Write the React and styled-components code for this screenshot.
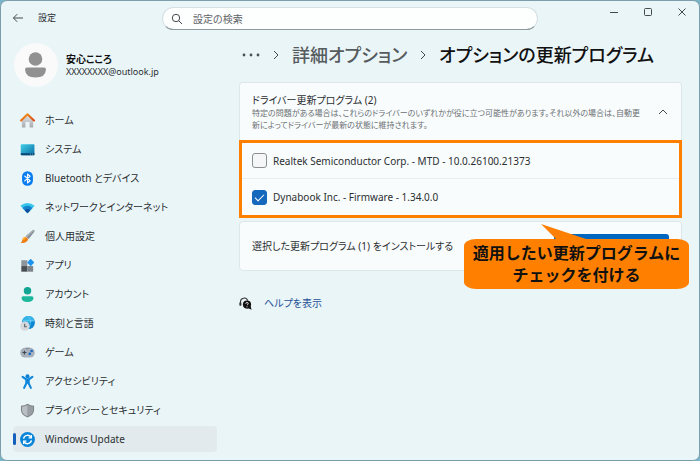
import {Component} from 'react'
import styled, {createGlobalStyle} from 'styled-components'

const HomeIcon = () => (
  <Icon viewBox="0 0 16 16">
    <defs>
      <linearGradient id="homeWall" x1="0" y1="0" x2="0" y2="1">
        <stop offset="0" stopColor="#e4e4e6" />
        <stop offset="1" stopColor="#a9abb0" />
      </linearGradient>
      <linearGradient id="homeRoof" x1="0" y1="0" x2="1" y2="1">
        <stop offset="0" stopColor="#f59a1c" />
        <stop offset="1" stopColor="#d9480f" />
      </linearGradient>
    </defs>
    <path d="M2 7 L8 1.6 L14 7 V15.4 H10.2 V9.6 H5.8 V15.4 H2 Z" fill="url(#homeWall)" />
    <path
      d="M1.1 8 L8 1.4 L14.9 8"
      fill="none"
      stroke="url(#homeRoof)"
      strokeWidth="2.2"
      strokeLinecap="round"
      strokeLinejoin="round"
    />
  </Icon>
)

const SystemIcon = () => (
  <Icon viewBox="0 0 16 16">
    <defs>
      <linearGradient id="screen" x1="0" y1="0" x2="1" y2="1">
        <stop offset="0" stopColor="#3fd0e6" />
        <stop offset="1" stopColor="#0d6ea8" />
      </linearGradient>
    </defs>
    <rect x="0.8" y="2.4" width="14.6" height="11.6" rx="1" fill="url(#screen)" />
    <path d="M0.8 12 H15.4 V13 a1 1 0 0 1 -1 1 H1.8 a1 1 0 0 1 -1 -1 Z" fill="#0a4674" />
    <path d="M10.6 13 h1 M12.8 13 h1" stroke="#8fd3ee" strokeWidth="0.8" />
  </Icon>
)

const BluetoothIcon = () => (
  <Icon viewBox="0 0 16 16">
    <rect x="2.2" y="0.2" width="11.6" height="15.6" rx="5.6" fill="#0a7cf0" />
    <path
      d="M5 5.4 L10.8 10.4 L8 12.8 V3.2 L10.8 5.6 L5 10.6"
      fill="none"
      stroke="#fff"
      strokeWidth="1.2"
      strokeLinejoin="round"
      strokeLinecap="round"
    />
  </Icon>
)

const NetworkIcon = () => (
  <Icon viewBox="0 0 16 16">
    <path d="M0.4 6.2 Q8 0 15.6 6.2 L8 14 Z" fill="#35c5ea" />
    <path d="M2.6 8.4 Q8 4 13.4 8.4 L8 14 Z" fill="#1383cf" />
    <path d="M5 10.8 Q8 8.2 11 10.8 L8 14 Z" fill="#0b4f9c" />
  </Icon>
)

const BrushIcon = () => (
  <Icon viewBox="0 0 16 16">
    <path d="M14.2 0.8 Q16 0.8 15.3 2.8 L9.2 10.6 L6 7.8 Z" fill="#848b94" />
    <path d="M14.2 0.8 L6 7.8 L7.4 9 L15.4 1.6 Z" fill="#a9afb6" />
    <path d="M5.4 8.4 Q8.4 8.8 8.6 11.2 Q7.2 15.6 0.6 14.8 Q2.2 13.6 2.4 11.6 Q3 8.6 5.4 8.4 Z" fill="#f07c14" />
    <path d="M5.4 8.4 Q3 8.6 2.4 11.6 L4 12 Q5 10 7 9 Z" fill="#ffb02e" />
  </Icon>
)

const AppsIcon = () => (
  <Icon viewBox="0 0 16 16">
    <rect x="1.4" y="2.4" width="6.4" height="6.2" fill="#8d949c" />
    <rect x="1.4" y="8.6" width="6.4" height="6" fill="#4a4f55" />
    <rect x="7.8" y="8.6" width="6.2" height="6" fill="#7c838b" />
    <rect
      x="8.6"
      y="2"
      width="5.6"
      height="5.6"
      rx="0.8"
      fill="#1c93ef"
      transform="rotate(45 11.4 4.8)"
    />
  </Icon>
)

const AccountIcon = () => (
  <Icon viewBox="0 0 16 16">
    <circle cx="8" cy="4" r="4" fill="#12a594" />
    <path d="M3.4 9.8 H12.6 Q14.4 9.8 14.4 11.6 Q14 16 8 16 Q2 16 1.6 11.6 Q1.6 9.8 3.4 9.8 Z" fill="#1fb79b" />
  </Icon>
)

const TimeIcon = () => (
  <Icon viewBox="0 0 16 16">
    <circle cx="9" cy="7" r="6.9" fill="#0f86d2" />
    <path d="M9 0.1 A6.9 6.9 0 0 1 15.4 4.6 Q11 8 4.6 8 L2.4 5 A6.9 6.9 0 0 1 9 0.1 Z" fill="#36b3e8" />
    <path d="M9 0.4 Q13.4 6.8 9 13.4 M3 5 H15.4" fill="none" stroke="#7bd8f7" strokeWidth="0.6" />
    <circle cx="5.2" cy="10.8" r="5" fill="#d5d9de" />
    <path d="M5 8.2 V11.4 H7.2" fill="none" stroke="#555b63" strokeWidth="1.1" />
  </Icon>
)

const GameIcon = () => (
  <Icon viewBox="0 0 16 16">
    <rect x="0.2" y="3" width="15.6" height="10.4" rx="5.2" fill="#a9b2bc" />
    <path d="M5.6 3 H10.6 L9.6 4.6 H6.6 Z" fill="#858e99" />
    <path d="M2.6 8 H6.8 M4.7 6 V10" stroke="#3f464f" strokeWidth="1.2" />
    <circle cx="12.4" cy="6.4" r="1.4" fill="#1467c4" />
    <circle cx="10.4" cy="9.4" r="1.4" fill="#1467c4" />
  </Icon>
)

const AccessibilityIcon = () => (
  <Icon viewBox="0 0 16 16">
    <circle cx="8" cy="2.4" r="2.1" fill="#0d7fd3" />
    <path d="M6 5 H10 V10 H6 Z" fill="#0d86dc" />
    <path
      d="M2.8 3 L6.6 5.8 H9.4 L13.2 3 M6.9 6 V9.6 L4.4 14.8 M9.1 6 V9.6 L11.6 14.8"
      fill="none"
      stroke="#0d86dc"
      strokeWidth="2.2"
      strokeLinecap="round"
      strokeLinejoin="round"
    />
  </Icon>
)

const ShieldIcon = () => (
  <Icon viewBox="0 0 16 16">
    <path d="M8 0.8 Q11 3 15 3 V7.6 Q15 12.6 8 15.4 Q1 12.6 1 7.6 V3 Q5 3 8 0.8 Z" fill="#7f858b" />
    <path d="M8 2.2 Q10.8 4 13.9 4.1 V7.6 Q13.9 11.8 8 14.2 Z" fill="#989ea4" />
    <path d="M8 2.2 Q5.2 4 2.1 4.1 V7.6 Q2.1 11.8 8 14.2 Z" fill="#b9bec3" />
  </Icon>
)

const UpdateIcon = () => (
  <Icon viewBox="0 0 16 16">
    <circle cx="8" cy="8" r="7.9" fill="#0a84d8" />
    <path
      d="M3.8 7 A4.4 4.4 0 0 1 11.8 5.6 M12.2 9 A4.4 4.4 0 0 1 4.2 10.4"
      fill="none"
      stroke="#fff"
      strokeWidth="1.5"
    />
    <path
      d="M12.2 3.2 V6.2 H9.2 M3.8 12.8 V9.8 H6.8"
      fill="none"
      stroke="#fff"
      strokeWidth="1.3"
    />
  </Icon>
)

const menuList = [
  {menuId: 'HOME', displayText: 'ホーム', MenuIcon: HomeIcon},
  {menuId: 'SYSTEM', displayText: 'システム', MenuIcon: SystemIcon},
  {
    menuId: 'BLUETOOTH',
    displayText: 'Bluetooth とデバイス',
    MenuIcon: BluetoothIcon,
  },
  {
    menuId: 'NETWORK',
    displayText: 'ネットワークとインターネット',
    MenuIcon: NetworkIcon,
  },
  {menuId: 'PERSONAL', displayText: '個人用設定', MenuIcon: BrushIcon},
  {menuId: 'APPS', displayText: 'アプリ', MenuIcon: AppsIcon},
  {menuId: 'ACCOUNT', displayText: 'アカウント', MenuIcon: AccountIcon},
  {menuId: 'TIME', displayText: '時刻と言語', MenuIcon: TimeIcon},
  {menuId: 'GAME', displayText: 'ゲーム', MenuIcon: GameIcon},
  {
    menuId: 'ACCESSIBILITY',
    displayText: 'アクセシビリティ',
    MenuIcon: AccessibilityIcon,
  },
  {
    menuId: 'PRIVACY',
    displayText: 'プライバシーとセキュリティ',
    MenuIcon: ShieldIcon,
  },
  {menuId: 'UPDATE', displayText: 'Windows Update', MenuIcon: UpdateIcon},
]

const driverList = [
  {
    driverId: 'realtek',
    displayText: 'Realtek Semiconductor Corp. - MTD - 10.0.26100.21373',
  },
  {driverId: 'dynabook', displayText: 'Dynabook Inc. - Firmware - 1.34.0.0'},
]

class App extends Component {
  state = {
    activeMenu: 'UPDATE',
    searchInput: '',
    isOpen: true,
    selected: ['dynabook'],
  }

  onChangeSearch = event => {
    this.setState({searchInput: event.target.value})
  }

  onToggleOpen = () => {
    this.setState(prevState => ({isOpen: !prevState.isOpen}))
  }

  onToggleDriver = id => {
    this.setState(prevState => ({
      selected: prevState.selected.includes(id)
        ? prevState.selected.filter(each => each !== id)
        : [...prevState.selected, id],
    }))
  }

  onRenderTitleBar = () => {
    const {searchInput} = this.state

    return (
      <TitleBar>
        <BackButton type="button" aria-label="戻る">
          <Glyph viewBox="0 0 12 12">
            <path d="M11 6 H1.5 M5.2 2.2 L1.4 6 L5.2 9.8" />
          </Glyph>
        </BackButton>
        <AppName>設定</AppName>
        <SearchBox>
          <Glyph viewBox="0 0 12 12">
            <circle cx="5" cy="5" r="3.7" />
            <path d="M7.8 7.8 L11 11" />
          </Glyph>
          <SearchInput
            type="text"
            aria-label="設定の検索"
            placeholder="設定の検索"
            value={searchInput}
            onChange={this.onChangeSearch}
          />
        </SearchBox>
        <WindowButtons>
          <WindowButton type="button" aria-label="最小化">
            <Glyph viewBox="0 0 12 12">
              <path d="M2 6.5 H10" />
            </Glyph>
          </WindowButton>
          <WindowButton type="button" aria-label="最大化">
            <Glyph viewBox="0 0 12 12">
              <rect x="2.5" y="2.5" width="7" height="7" rx="1" />
            </Glyph>
          </WindowButton>
          <WindowButton type="button" aria-label="閉じる">
            <Glyph viewBox="0 0 12 12">
              <path d="M2.5 2.5 L9.5 9.5 M9.5 2.5 L2.5 9.5" />
            </Glyph>
          </WindowButton>
        </WindowButtons>
      </TitleBar>
    )
  }

  onRenderSidebar = () => {
    const {activeMenu} = this.state

    return (
      <Sidebar>
        <Profile>
          <Avatar viewBox="0 0 44 44">
            <circle cx="22" cy="22" r="22" fill="#fafafa" />
            <circle cx="21.5" cy="16" r="6.8" fill="#919191" />
            <path
              d="M13 24.5 H30 Q32 24.5 32 26.5 Q31.5 34.5 21.5 34.5 Q11.5 34.5 11 26.5 Q11 24.5 13 24.5 Z"
              fill="#919191"
            />
          </Avatar>
          <div>
            <UserName>安心こころ</UserName>
            <UserMail>XXXXXXXX@outlook.jp</UserMail>
          </div>
        </Profile>
        <Menu>
          {menuList.map(({menuId, displayText, MenuIcon}) => (
            <li key={menuId}>
              <MenuLink
                href={`#${menuId}`}
                $isActive={menuId === activeMenu}
                onClick={() => this.setState({activeMenu: menuId})}
              >
                <MenuIcon />
                {displayText}
              </MenuLink>
            </li>
          ))}
        </Menu>
      </Sidebar>
    )
  }

  onRenderDrivers = () => {
    const {selected} = this.state

    return (
      <DriverList>
        {driverList.map(each => (
          <DriverItem key={each.driverId}>
            <Checkbox
              type="checkbox"
              id={each.driverId}
              checked={selected.includes(each.driverId)}
              onChange={() => this.onToggleDriver(each.driverId)}
            />
            <label htmlFor={each.driverId}>{each.displayText}</label>
          </DriverItem>
        ))}
      </DriverList>
    )
  }

  render() {
    const {isOpen, selected} = this.state

    return (
      <>
        <GlobalStyle />
        <Window>
          {this.onRenderTitleBar()}
          <Body>
            {this.onRenderSidebar()}
            <Content>
              <Breadcrumb>
                <Dots viewBox="0 0 18 6">
                  <circle cx="2" cy="3" r="1.4" />
                  <circle cx="9" cy="3" r="1.4" />
                  <circle cx="16" cy="3" r="1.4" />
                </Dots>
                <Glyph viewBox="0 0 12 12">
                  <path d="M4 2 L8 6 L4 10" />
                </Glyph>
                <CrumbLink href="#advanced">詳細オプション</CrumbLink>
                <Glyph viewBox="0 0 12 12">
                  <path d="M4 2 L8 6 L4 10" />
                </Glyph>
                <Heading>オプションの更新プログラム</Heading>
              </Breadcrumb>
              <DriverHeader>
                <div>
                  <SubHeading>ドライバー更新プログラム (2)</SubHeading>
                  <Description>
                    特定の問題がある場合は、これらのドライバーのいずれかが役に立つ可能性があります。それ以外の場合は、自動更新によってドライバーが最新の状態に維持されます。
                  </Description>
                </div>
                <ToggleButton
                  type="button"
                  aria-label="ドライバー更新プログラム"
                  aria-expanded={isOpen}
                  onClick={this.onToggleOpen}
                >
                  <Glyph viewBox="0 0 12 12">
                    <path d={isOpen ? 'M2 8 L6 4 L10 8' : 'M2 4 L6 8 L10 4'} />
                  </Glyph>
                </ToggleButton>
              </DriverHeader>
              {isOpen && this.onRenderDrivers()}
              <InstallCard>
                <Text>
                  選択した更新プログラム ({selected.length}) をインストールする
                </Text>
                <InstallButton
                  type="button"
                  aria-label="ダウンロードとインストール"
                />
                <Callout>
                  <CalloutTail viewBox="0 0 54 18">
                    <path d="M0 0 L54 18 H18 Z" />
                  </CalloutTail>
                  適用したい更新プログラムに
                  <br />
                  チェックを付ける
                </Callout>
              </InstallCard>
              <HelpRow>
                <HelpIcon viewBox="0 0 14 14">
                  <path
                    d="M1.6 7 V5.5 A4 4 0 0 1 9.4 4"
                    fill="none"
                    stroke="#333"
                    strokeWidth="1.1"
                  />
                  <rect x="0.4" y="5.5" width="2.2" height="4" rx="1" fill="#333" />
                  <circle cx="8.6" cy="8.2" r="4.4" fill="#111" />
                  <path d="M10 12 L13.6 13.6 L12.4 9.6 Z" fill="#111" />
                  <path
                    d="M7.3 7.3 Q7.3 5.9 8.6 5.9 Q9.9 5.9 9.9 7.2 Q9.8 8 8.6 8.8"
                    fill="none"
                    stroke="#fff"
                    strokeWidth="0.9"
                  />
                  <circle cx="8.6" cy="10.5" r="0.6" fill="#fff" />
                </HelpIcon>
                <HelpLink href="#help">ヘルプを表示</HelpLink>
              </HelpRow>
            </Content>
          </Body>
        </Window>
      </>
    )
  }
}

export default App

const GlobalStyle = createGlobalStyle`
  * {
    box-sizing:border-box;
  }
  body {
    margin:0;
    background-color:#79b4c9;
    font-family:'Noto Sans', 'Noto Sans CJK JP', sans-serif;
    font-size:10px;
    line-height:16px;
    font-feature-settings:'palt';
    color:#2b2f31;
  }
  button, input {
    font:inherit;
    color:inherit;
    font-feature-settings:inherit;
  }
`

const Window = styled.div`
  min-height:100vh;
  display:flex;
  flex-direction:column;
  background-color:#eaf5f8;
  border:1px solid #7b9eac;
  border-radius:7px;
`

const Icon = styled.svg`
  width:15px;
  height:15px;
  flex-shrink:0;
`

const Glyph = styled.svg`
  width:12px;
  height:12px;
  flex-shrink:0;
  fill:none;
  stroke:#44494c;
  stroke-width:1;
`

// title bar

const TitleBar = styled.header`
  display:flex;
  align-items:flex-start;
  height:36px;
  padding-left:11px;
`

const BackButton = styled.button`
  display:flex;
  padding:11px 0;
  border:none;
  background-color:transparent;
`

const AppName = styled.span`
  width:138px;
  flex-shrink:0;
  padding:9px 0 0 14px;
  font-size:9px;
`

const SearchBox = styled.div`
  flex:1;
  min-width:0;
  display:flex;
  align-items:center;
  column-gap:10px;
  height:23px;
  margin-top:6px;
  padding:0 8px;
  background-color:#fdfefe;
  border:1px solid #d5e0e3;
  border-bottom-color:#8f9a9d;
  border-radius:12px;
`

const SearchInput = styled.input`
  flex:1;
  min-width:0;
  padding:0;
  border:none;
  outline:none;
  background-color:transparent;

  &::placeholder {
    color:#5f6466;
  }
`

const WindowButtons = styled.div`
  display:flex;
  padding-left:59px;
`

const WindowButton = styled.button`
  display:flex;
  justify-content:center;
  width:34px;
  padding:5px 0;
  border:none;
  background-color:transparent;
`

// sidebar

const Body = styled.div`
  flex:1;
  display:flex;
`

const Sidebar = styled.aside`
  width:216px;
  flex-shrink:0;
  padding:6px 0 6px 12px;
`

const Profile = styled.div`
  display:flex;
  align-items:center;
  column-gap:8px;
  padding-left:1px;
`

const Avatar = styled.svg`
  width:44px;
  height:44px;
`

const UserName = styled.p`
  margin:0;
  font-weight:bold;
  line-height:14px;
  color:#111;
`

const UserMail = styled.p`
  margin:0;
  font-size:9px;
  line-height:12px;
`

const Menu = styled.ul`
  display:flex;
  flex-direction:column;
  row-gap:3px;
  margin:20px 0 0;
  padding:0;
  list-style:none;
`

const MenuLink = styled.a`
  position:relative;
  display:flex;
  align-items:center;
  column-gap:10px;
  height:26px;
  padding-left:7px;
  border-radius:4px;
  background-color:${props => (props.$isActive ? '#e2eaed' : 'transparent')};
  color:inherit;
  text-decoration:none;

  &::before {
    content:'';
    position:absolute;
    left:0;
    width:3px;
    height:12px;
    border-radius:2px;
    background-color:${props => (props.$isActive ? '#1560bd' : 'transparent')};
  }
`

// content

const Content = styled.main`
  flex:1;
  min-width:0;
  padding:4px 17px 0 22px;
`

const Breadcrumb = styled.nav`
  display:flex;
  align-items:center;
  column-gap:10px;
  height:28px;
  margin-bottom:13px;
  padding-left:3px;
  font-size:18px;
  font-weight:500;
  line-height:28px;
  white-space:nowrap;
`

const Dots = styled.svg`
  width:18px;
  height:6px;
  fill:#4b5053;
`

const CrumbLink = styled.a`
  color:#565b5e;
  text-decoration:none;
`

const Heading = styled.h1`
  margin:0;
  font-size:18px;
  font-weight:500;
  color:#111;
`

const DriverHeader = styled.div`
  display:flex;
  align-items:center;
  justify-content:space-between;
  column-gap:12px;
  height:58px;
  padding:0 12px;
  background-color:#f9fcfd;
  border:1px solid #dde7ea;
  border-bottom:none;
  border-radius:4px 4px 0 0;
`

const SubHeading = styled.h2`
  margin:0;
  font-size:10px;
  font-weight:normal;
  line-height:14px;
`

const Description = styled.p`
  margin:0;
  font-size:8px;
  line-height:12px;
  color:#6b7073;
`

const ToggleButton = styled.button`
  display:flex;
  padding:0;
  border:none;
  background-color:transparent;
`

const DriverList = styled.ul`
  margin:0;
  padding:0;
  list-style:none;
  background-color:#f9fcfd;
  border:3px solid #ff8000;
`

const DriverItem = styled.li`
  display:flex;
  align-items:center;
  column-gap:6px;
  height:36px;
  padding-left:10px;

  &:not(:last-child) {
    border-bottom:1px solid #e6eef0;
  }
`

const Checkbox = styled.input`
  appearance:none;
  display:grid;
  place-items:center;
  width:15px;
  height:15px;
  margin:0;
  border:1px solid #8c8f91;
  border-radius:3px;
  background-color:#f4f6f7;

  &:checked {
    border-color:#1668bd;
    background-color:#1668bd;
  }

  &:checked::before {
    content:'';
    width:8px;
    height:4px;
    border:solid #fff;
    border-width:0 0 1px 1px;
    transform:translateY(-1px) rotate(-45deg);
  }
`

const InstallCard = styled.section`
  position:relative;
  display:flex;
  align-items:center;
  justify-content:space-between;
  height:50px;
  margin-top:3px;
  padding:0 12px;
  background-color:#f9fcfd;
  border:1px solid #dde7ea;
  border-radius:4px;
`

const Text = styled.p`
  margin:0;
`

const InstallButton = styled.button`
  width:115px;
  height:24px;
  border:none;
  border-radius:3px;
  background-color:#0067c0;
`

const Callout = styled.div`
  position:absolute;
  top:17px;
  right:-8px;
  width:225px;
  padding:3px 0;
  border-radius:12px / 7px;
  background-color:#ff8000;
  color:#111;
  font-size:16px;
  font-weight:bold;
  font-feature-settings:normal;
  line-height:22px;
  text-align:center;
`

const CalloutTail = styled.svg`
  position:absolute;
  top:-15px;
  left:77px;
  width:54px;
  height:18px;
  fill:#ff8000;
`

const HelpRow = styled.div`
  display:flex;
  align-items:center;
  column-gap:12px;
  margin-top:24px;
`

const HelpIcon = styled.svg`
  width:13px;
  height:13px;
`

const HelpLink = styled.a`
  color:#1f5196;
  text-decoration:none;
`
